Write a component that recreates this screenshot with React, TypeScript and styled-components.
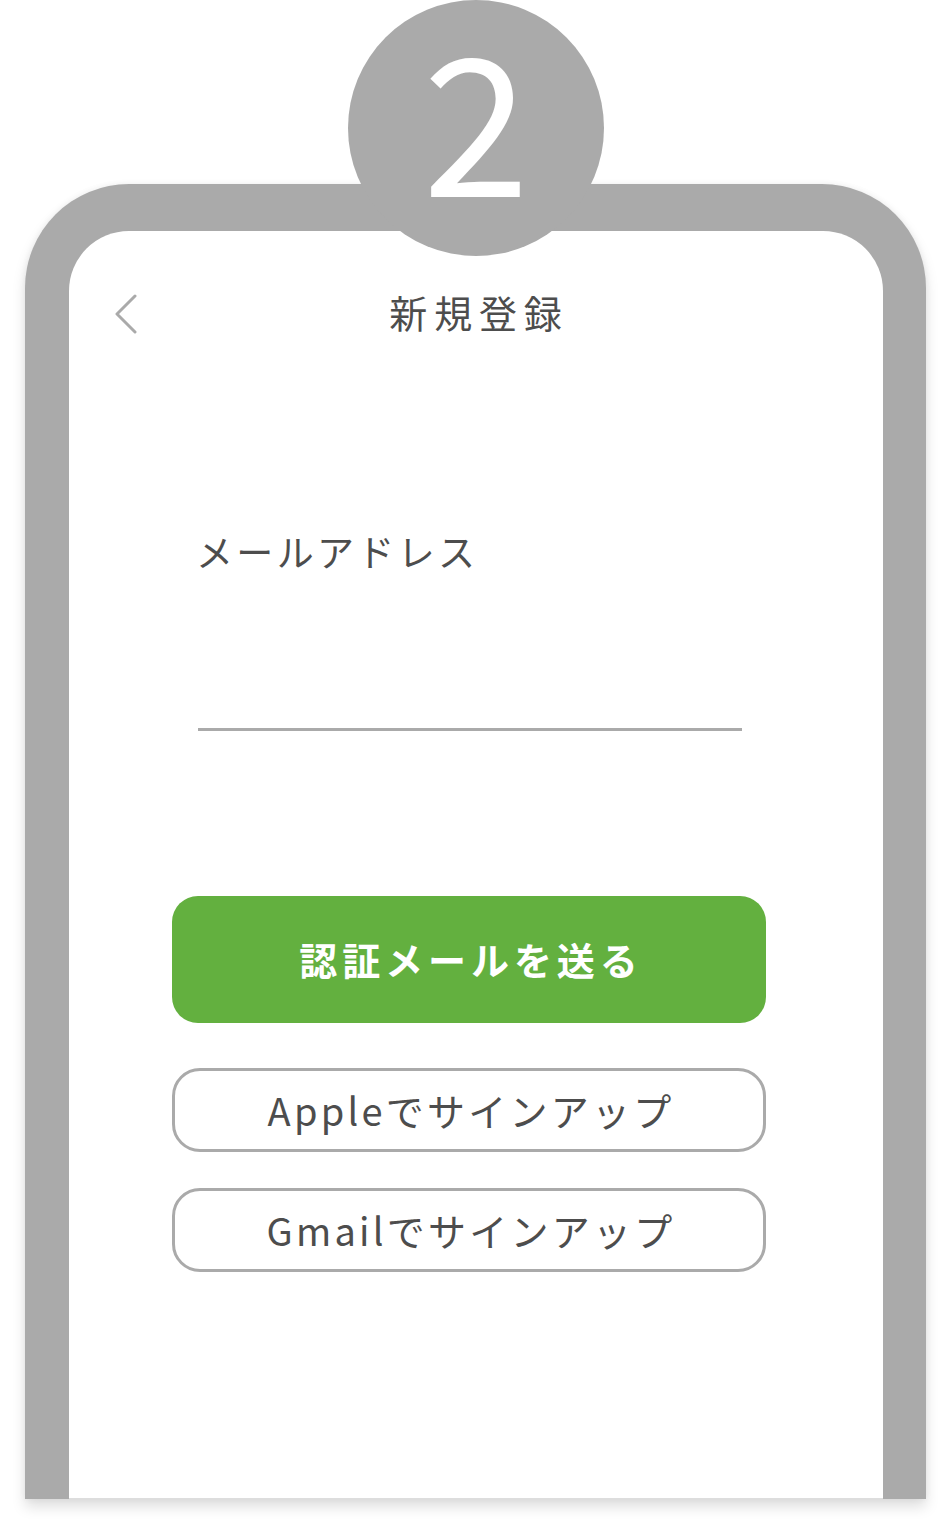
import * as React from "react";
import styled, { createGlobalStyle } from "styled-components";

const colors = {
  frame: "#aaaaaa",
  text: "#4d4d4d",
  green: "#63b03f",
  line: "#aaaaaa",
  white: "#ffffff"
};

const GlobalStyle = createGlobalStyle`
  html, body {
    margin: 0;
    padding: 0;
    background: ${colors.white};
  }
  body {
    font-family: "Noto Sans CJK JP", "Noto Sans", sans-serif;
    color: ${colors.text};
  }
`;

const StyledPage: any = styled.div`
  position: relative;
  width: 952px;
  height: 1534px;
  overflow: hidden;
  padding: 184px 26px 0 25px;
  box-sizing: border-box;
`;

const StyledFrame: any = styled.div`
  height: 1315px;
  background: ${colors.frame};
  border-radius: 104px 104px 0 0;
  padding: 47px 43px 0 44px;
  box-sizing: border-box;
  display: flex;
  box-shadow: 0 8px 14px rgba(0, 0, 0, 0.13), 0 0 6px rgba(0, 0, 0, 0.06);
`;

const StyledScreen: any = styled.div`
  flex: 1;
  background: ${colors.white};
  border-radius: 60px 60px 0 0;
  border-bottom: 1px solid #dddddd;
  display: flex;
  flex-direction: column;
`;

const StyledBadge: any = styled.div`
  position: absolute;
  top: 0;
  left: 348px;
  width: 256px;
  height: 256px;
  border-radius: 50%;
  background: ${colors.frame};
  color: ${colors.white};
  display: flex;
  align-items: center;
  justify-content: center;
  font-family: "Noto Sans CJK JP", "Noto Sans", sans-serif;
  font-size: 192px;
  line-height: 200px;
  padding-bottom: 30px;
  box-sizing: border-box;
`;

const StyledHeader: any = styled.div`
  position: relative;
  height: 48px;
  margin-top: 57px;
  display: flex;
  align-items: center;
  justify-content: center;
`;

const StyledBack: any = styled.button`
  position: absolute;
  left: 42px;
  top: 6px;
  width: 30px;
  height: 40px;
  padding: 0;
  border: none;
  background: none;
  display: flex;
  align-items: center;
  justify-content: center;
`;

const StyledTitle: any = styled.h1`
  margin: 0 0 0 6px;
  font-size: 38px;
  font-weight: 400;
  line-height: 48px;
  letter-spacing: 0.18em;
  color: ${colors.text};
`;

const StyledContent: any = styled.div`
  display: flex;
  flex-direction: column;
  padding: 0 117px 0 103px;
`;

const StyledLabel: any = styled.label`
  margin: 191px 0 0 24px;
  font-size: 37px;
  line-height: 48px;
  letter-spacing: 0.09em;
  color: ${colors.text};
`;

const StyledField: any = styled.input`
  margin: 0 24px 0 26px;
  height: 156px;
  border: none;
  border-bottom: 3px solid ${colors.line};
  background: transparent;
  outline: none;
  padding: 0;
  box-sizing: border-box;
  font-family: inherit;
  font-size: 32px;
`;

const StyledButton: any = styled.button`
  width: 100%;
  box-sizing: border-box;
  font-family: "Noto Sans CJK JP", "Noto Sans", sans-serif;
  display: flex;
  align-items: center;
  justify-content: center;
  cursor: pointer;
  margin-top: ${(props: any) => props.gap}px;
  height: ${(props: any) => (props.primary ? 127 : 84)}px;
  border-radius: ${(props: any) => (props.primary ? 26 : 28)}px;
  background: ${(props: any) => (props.primary ? colors.green : colors.white)};
  border: ${(props: any) =>
    props.primary ? "none" : `3px solid ${colors.frame}`};
  color: ${(props: any) => (props.primary ? colors.white : colors.text)};
  font-size: 38px;
  font-weight: ${(props: any) => (props.primary ? 700 : 400)};
  letter-spacing: ${(props: any) => (props.primary ? "0.13em" : "0.085em")};
  padding: 0 0 2px 4px;
`;

const BackIcon = () => (
  <svg width="26" height="40" viewBox="0 0 26 40">
    <polyline
      points="22,2 4,20 22,38"
      fill="none"
      stroke={colors.frame}
      strokeWidth="3"
      strokeLinecap="round"
      strokeLinejoin="round"
    />
  </svg>
);

export default function App() {
  return (
    <StyledPage>
      <GlobalStyle />
      <StyledFrame>
        <StyledScreen>
          <StyledHeader>
            <StyledBack aria-label="戻る">
              <BackIcon />
            </StyledBack>
            <StyledTitle>新規登録</StyledTitle>
          </StyledHeader>
          <StyledContent>
            <StyledLabel htmlFor="email">メールアドレス</StyledLabel>
            <StyledField id="email" type="email" />
            <StyledButton primary gap={165}>
              認証メールを送る
            </StyledButton>
            <StyledButton gap={45}>Appleでサインアップ</StyledButton>
            <StyledButton gap={36}>Gmailでサインアップ</StyledButton>
          </StyledContent>
        </StyledScreen>
      </StyledFrame>
      <StyledBadge>2</StyledBadge>
    </StyledPage>
  );
}
